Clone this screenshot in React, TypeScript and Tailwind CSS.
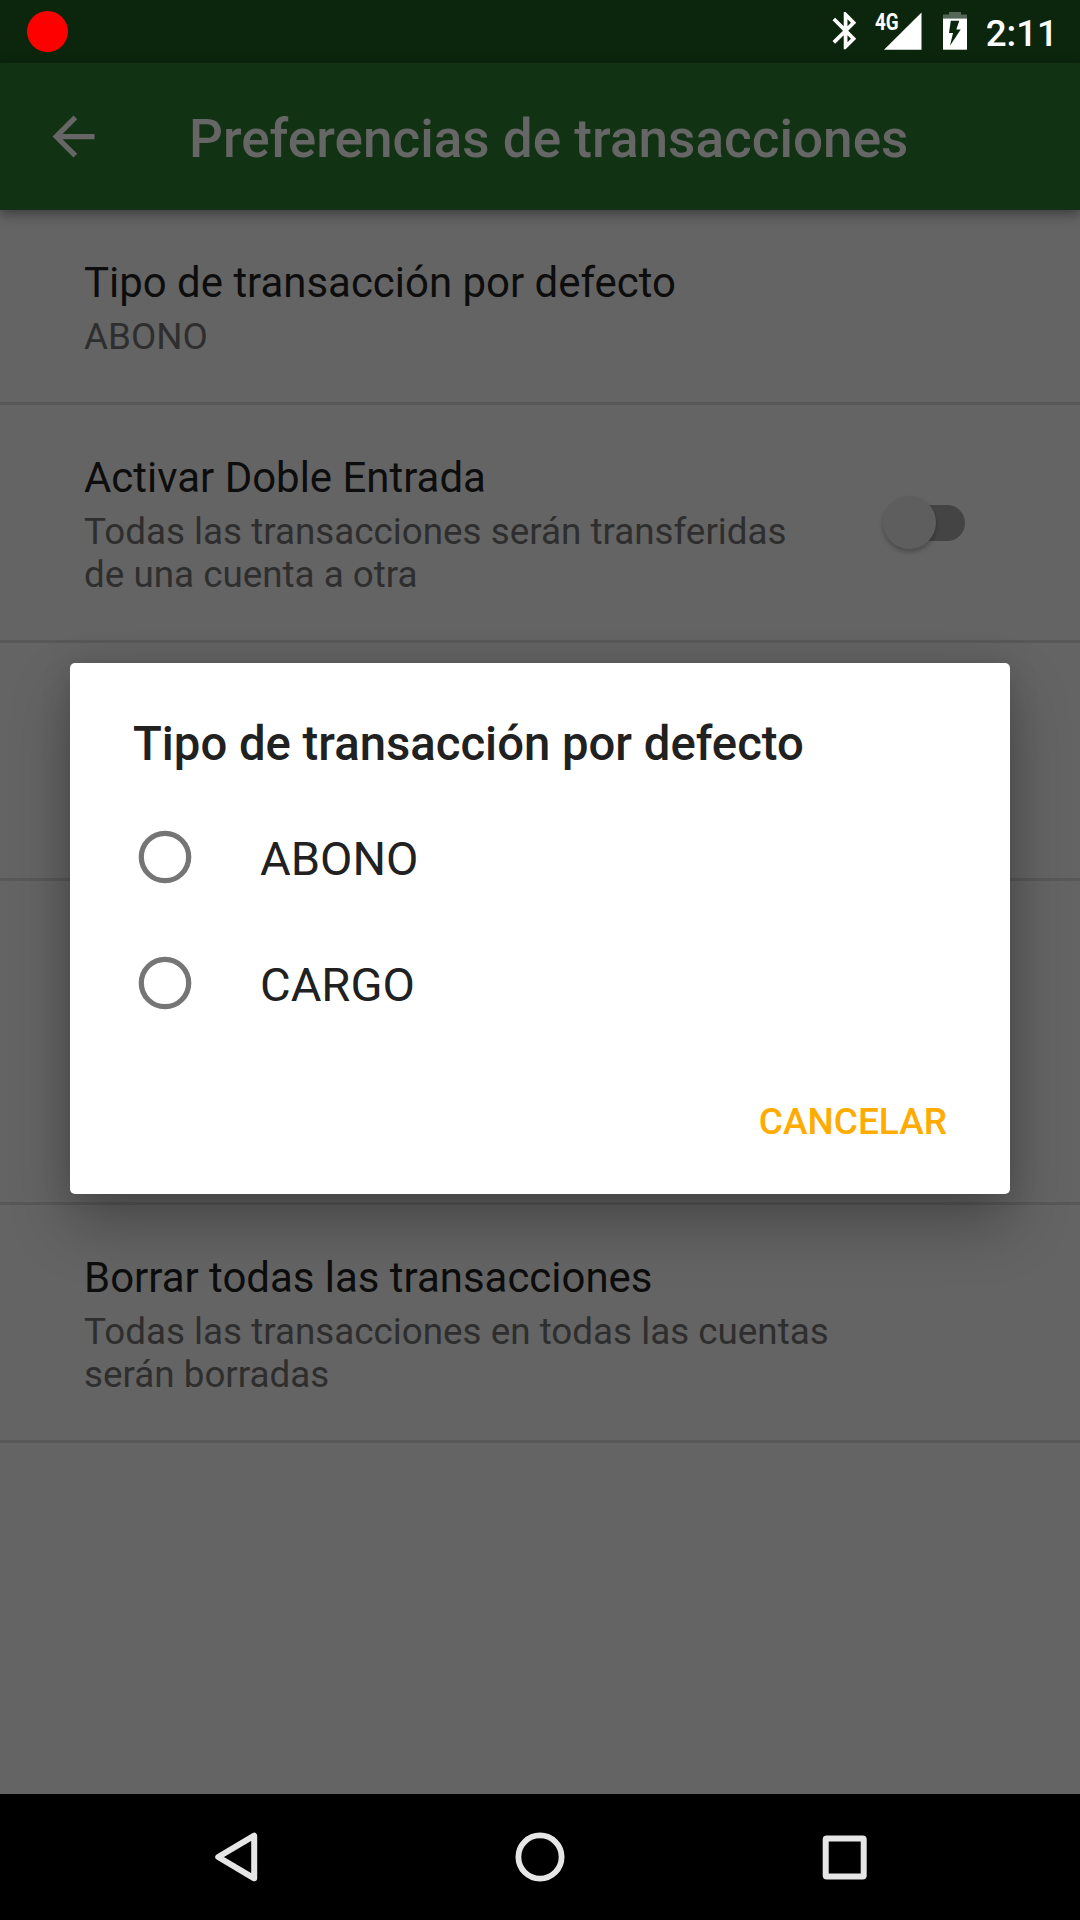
import type { ReactNode } from "react";

function StatusBar() {
  return (
    <header className="flex h-[63px] items-center justify-between bg-[#0b260d] pr-[22px] pl-[27px]">
      <span className="mb-px size-[41px] rounded-full bg-[#ff0000]" />
      <div className="flex h-full items-center text-white">
        <svg className="mr-[16px] mb-[2px] h-[38px] w-[27px]" viewBox="0 0 27 38" fill="white">
          <path
            transform="translate(-7.8 -3.7) scale(1.866)"
            d="M17.71 7.71L12 2h-1v7.59L6.41 5 5 6.41 10.59 12 5 17.59 6.41 19 11 14.41V22h1l5.71-5.71-4.3-4.29 4.3-4.29zM13 5.83l1.88 1.88L13 9.59V5.83zm1.88 10.46L13 18.17v-3.76l1.88 1.88z"
          />
        </svg>
        <div className="relative mb-px h-[38px] w-[48px]">
          <svg className="size-full" viewBox="0 0 48 38" fill="white">
            <path d="M10 37.7L47.5 0.5V37.7z" />
          </svg>
          <span className="absolute top-[-3px] left-px origin-left scale-x-[0.82] text-[23px] leading-[27px] font-bold">
            4G
          </span>
        </div>
        <svg className="mb-px ml-[21px] h-[38px] w-[24px]" viewBox="0 0 24 38" fill="white">
          <path opacity="0.3" d="M6 0h12v2.6h6V6.5H0V2.6h6z" />
          <path d="M0 6.5h24V37.7H0z" />
          <path fill="#0b260d" d="M7.8 8.7h8.5l-3 8.7h4.4L7 33.8 10 21H6z" />
        </svg>
        <span className="mt-[3px] ml-[19px] text-[36.75px] leading-[43px] font-medium">2:11</span>
      </div>
    </header>
  );
}

function Toolbar() {
  return (
    <div className="relative flex h-[147px] items-center bg-[#123214] pl-[42px] text-[#666] shadow-[0_3px_12px_1px_rgba(0,0,0,0.4)]">
      <svg className="size-[63px]" viewBox="0 0 24 24" fill="currentColor">
        <path d="M20 11H7.83l5.59-5.59L12 4l-8 8 8 8 1.41-1.41L7.83 13H20v-2z" />
      </svg>
      <h1 className="mt-[5px] ml-[84px] text-[53.1px] leading-[62px] font-medium">Preferencias de transacciones</h1>
    </div>
  );
}

function Row({ title, lines = [], control }: { title: string; lines?: string[]; control?: ReactNode }) {
  return (
    <li className="flex items-center justify-between border-b-[3px] border-[#585858] pt-[48px] pr-[105px] pb-[44px] pl-[84px]">
      <div className="whitespace-nowrap">
        <h2 className="text-[41.95px] leading-[49px] text-[#0d0d0d]">{title}</h2>
        <p className="mt-2 text-[36.8px] leading-[43px] text-[#2e2e2e]">
          {lines.map((line) => (
            <span key={line} className="block">
              {line}
            </span>
          ))}
        </p>
      </div>
      {control}
    </li>
  );
}

function Switch() {
  return (
    <span className="relative mb-[5px] h-[53px] w-[92px]">
      <span className="absolute top-[9px] right-[10px] h-[36px] w-[73px] rounded-full bg-[#444]" />
      <span className="absolute top-0 left-0 size-[53px] rounded-full bg-[#5e5e5e] shadow-[0_3px_4px_rgba(0,0,0,0.25)]" />
    </span>
  );
}

function Option({ label }: { label: string }) {
  return (
    <label className="flex h-[126px] items-center">
      <svg className="size-[54px]" viewBox="0 0 54 54" fill="none" stroke="#757575" strokeWidth="5.25">
        <circle cx="27" cy="27" r="23.7" />
      </svg>
      <span className="mt-[4px] ml-[68px] text-[47.1px] leading-[56px]">{label}</span>
    </label>
  );
}

function Dialog() {
  return (
    <div
      role="dialog"
      className="absolute top-[663px] left-[70px] h-[531px] w-[940px] rounded-[5px] bg-white text-[#212121] shadow-[0_30px_60px_rgba(0,0,0,0.27),0_0_30px_rgba(0,0,0,0.12)]"
    >
      <div className="flex h-full flex-col pt-[53px]">
        <h2 className="pl-[63px] text-[47.25px] leading-[56px] font-medium">Tipo de transacción por defecto</h2>
        <div className="mt-[22px] pl-[68px]">
          <Option label="ABONO" />
          <Option label="CARGO" />
        </div>
        <button className="mt-[54px] self-end pr-[63px] text-[37px] leading-[43px] font-medium text-[#ffab00]">
          CANCELAR
        </button>
      </div>
    </div>
  );
}

function NavBar() {
  return (
    <nav className="flex h-[126px] items-center justify-between bg-black pr-[213px] pl-[214px]">
      <svg className="size-[52px]" viewBox="0 0 52 52" fill="none" stroke="#e6e6e6" strokeWidth="6" strokeLinejoin="round">
        <path d="M4.2 26L40.2 4.7V47.3z" />
      </svg>
      <svg className="-ml-[8px] size-[52px]" viewBox="0 0 52 52" fill="none" stroke="#e6e6e6" strokeWidth="5.8">
        <circle cx="26" cy="26" r="21.6" />
      </svg>
      <svg className="size-[45px]" viewBox="0 0 45 45" fill="none" stroke="#e6e6e6" strokeWidth="6" strokeLinejoin="round">
        <rect x="3.7" y="3.5" width="38" height="38" rx="1" />
      </svg>
    </nav>
  );
}

export default function App() {
  return (
    <div className="relative flex h-[1920px] w-[1080px] flex-col overflow-hidden bg-[#646464] font-[Roboto,sans-serif]">
      <StatusBar />
      <Toolbar />
      <ul className="flex-1">
        <Row title="Tipo de transacción por defecto" lines={["ABONO"]} />
        <Row
          title="Activar Doble Entrada"
          lines={["Todas las transacciones serán transferidas", "de una cuenta a otra"]}
          control={<Switch />}
        />
        <li className="h-[238px] border-b-[3px] border-[#585858]" />
        <li className="h-[324px] border-b-[3px] border-[#585858]" />
        <Row
          title="Borrar todas las transacciones"
          lines={["Todas las transacciones en todas las cuentas", "serán borradas"]}
        />
      </ul>
      <NavBar />
      <Dialog />
    </div>
  );
}
